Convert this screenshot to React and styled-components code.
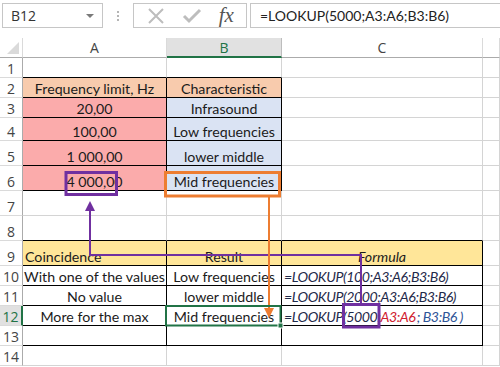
import React from 'react';
import styled, { createGlobalStyle } from 'styled-components';

const GlobalStyle = createGlobalStyle`
    html, body {
        margin: 0;
        padding: 0;
        background: #fff;
        font-family: Lato, "Liberation Sans", sans-serif;
    }
`;

const GRID = '#D4D4D4';
const BLACK = '#000';
const GREEN = '#217346';

const rowHeights = [20, 20, 20, 23, 25, 25, 25, 25, 25, 20, 20, 20, 20, 20, 21];

const rows = [
    { n: 1, cells: [{ bb: BLACK }, { bb: BLACK }, {}, {}] },
    { n: 2, cells: [
        { text: 'Frequency limit, Hz', bg: '#F8CBAD', rb: BLACK, bb: BLACK },
        { text: 'Characteristic', bg: '#F8CBAD', rb: BLACK, bb: BLACK },
        {}, {}] },
    { n: 3, cells: [
        { text: '20,00', bg: '#FBABAB', rb: BLACK, bb: BLACK },
        { text: 'Infrasound', bg: '#DAE3F3', rb: BLACK, bb: BLACK },
        {}, {}] },
    { n: 4, cells: [
        { text: '100,00', bg: '#FBABAB', rb: BLACK, bb: BLACK },
        { text: 'Low frequencies', bg: '#DAE3F3', rb: BLACK, bb: BLACK },
        {}, {}] },
    { n: 5, cells: [
        { text: '1 000,00', bg: '#FBABAB', rb: BLACK, bb: BLACK },
        { text: 'lower middle', bg: '#DAE3F3', rb: BLACK, bb: BLACK },
        {}, {}] },
    { n: 6, cells: [
        { text: '4 000,00', bg: '#FBABAB', rb: BLACK, bb: BLACK },
        { text: 'Mid frequencies', bg: '#DAE3F3', rb: BLACK, bb: BLACK },
        {}, {}] },
    { n: 7, cells: [{}, {}, {}, {}] },
    { n: 8, cells: [{ bb: BLACK }, { bb: BLACK }, { bb: BLACK }, {}] },
    { n: 9, cells: [
        { text: 'Coincidence', bg: '#FFE699', rb: BLACK, bb: BLACK, align: 'flex-start' },
        { text: 'Result', bg: '#FFE699', rb: BLACK, bb: BLACK },
        { text: 'Formula', bg: '#FFE699', rb: BLACK, bb: BLACK, italic: true },
        {}] },
    { n: 10, cells: [
        { text: 'With one of the values', rb: BLACK, bb: BLACK },
        { text: 'Low frequencies', rb: BLACK, bb: BLACK },
        { text: '=LOOKUP(100;A3:A6;B3:B6)', rb: BLACK, bb: BLACK, italic: true, align: 'flex-start', formula: true },
        {}] },
    { n: 11, cells: [
        { text: 'No value', rb: BLACK, bb: BLACK },
        { text: 'lower middle', rb: BLACK, bb: BLACK },
        { text: '=LOOKUP(2000;A3:A6;B3:B6)', rb: BLACK, bb: BLACK, italic: true, align: 'flex-start', formula: true },
        {}] },
    { n: 12, selected: true, cells: [
        { text: 'More for the max', rb: BLACK, bb: BLACK },
        { text: 'Mid frequencies', rb: BLACK, bb: BLACK },
        { rich: true, rb: BLACK, bb: BLACK, italic: true, align: 'flex-start', formula: true },
        {}] },
    { n: 13, cells: [{ rb: BLACK, bb: BLACK }, { rb: BLACK, bb: BLACK }, { rb: BLACK, bb: BLACK }, {}] },
    { n: 14, cells: [{}, {}, {}, {}] },
];

const App = () => {
    return (
        <>
            <GlobalStyle />
            <Page>
                <Toolbar>
                    <NameBox>
                        <span>B12</span>
                        <DropArrow />
                    </NameBox>
                    <Dots>
                        <i /><i /><i />
                    </Dots>
                    <FxBox>
                        <svg width="20" height="20" viewBox="0 0 20 20">
                            <path d="M3 3 L17 17 M17 3 L3 17" stroke="#BDBDBD" strokeWidth="2" fill="none" />
                        </svg>
                        <svg width="20" height="20" viewBox="0 0 20 20">
                            <path d="M2 10 L7 15 L18 4" stroke="#BDBDBD" strokeWidth="3" fill="none" />
                        </svg>
                        <FxText>fx</FxText>
                    </FxBox>
                    <FormulaInput>=LOOKUP(5000;A3:A6;B3:B6)</FormulaInput>
                </Toolbar>

                <Sheet>
                    <Corner />
                    <ColHead>A</ColHead>
                    <ColHead $active>B</ColHead>
                    <ColHead>C</ColHead>
                    <ColHead $last />

                    {rows.map((row) => (
                        <React.Fragment key={row.n}>
                            <RowHead $active={row.selected}>{row.n}</RowHead>
                            {row.cells.map((c, i) => (
                                <Cell
                                    key={i}
                                    $bg={c.bg}
                                    $rb={c.rb}
                                    $bb={c.bb}
                                    $align={c.align}
                                    $italic={c.italic}
                                    $formula={c.formula}
                                >
                                    {c.rich ? (
                                        <span>
                                            =LOOKUP(5000;<Ref $color="#D0202E">A3:A6</Ref>
                                            <Ref $color="#2F5597">&thinsp;; B3:B6 )</Ref>
                                        </span>
                                    ) : (
                                        c.text
                                    )}
                                </Cell>
                            ))}
                        </React.Fragment>
                    ))}
                </Sheet>

                <Overlay width="500" height="367" viewBox="0 0 500 367">
                    {/* purple: C12 lookup value to A6 */}
                    <rect x="66" y="172.5" width="50.5" height="22" fill="none" stroke="#7030A0" strokeWidth="3" />
                    <rect x="343.5" y="304.5" width="35.5" height="22.5" fill="none" stroke="#7030A0" strokeWidth="3" />
                    <path d="M361 303 L361 255 L90 255 L90 209" fill="none" stroke="#7030A0" strokeWidth="2" />
                    <path d="M85 211 L90 201 L95 211 Z" fill="#7030A0" />
                    {/* orange: B6 result to B12 */}
                    <rect x="165.5" y="172.5" width="114" height="23.5" fill="none" stroke="#ED7D31" strokeWidth="3" />
                    <path d="M269 197 L269 310" fill="none" stroke="#ED7D31" strokeWidth="2" />
                    <path d="M264 308 L269 318 L274 308 Z" fill="#ED7D31" />
                    {/* selection */}
                    <rect x="166" y="306" width="114.5" height="19.5" fill="none" stroke={GREEN} strokeWidth="2" />
                    <rect x="278" y="323" width="5" height="5" fill={GREEN} stroke="#fff" strokeWidth="1" />
                </Overlay>
            </Page>
        </>
    );
};

export default App;

const Page = styled.div`
    position: relative;
    width: 500px;
    height: 367px;
    overflow: hidden;
    background: #fff;
`;

const Toolbar = styled.div`
    display: flex;
    align-items: flex-start;
    height: 38px;
    padding: 3px 0 0 2px;
    box-sizing: border-box;
    font-family: "Open Sans", "Liberation Sans", sans-serif;
`;

const NameBox = styled.div`
    display: flex;
    align-items: center;
    justify-content: space-between;
    box-sizing: border-box;
    width: 101px;
    height: 25px;
    padding: 0 8px 0 8px;
    border: 1px solid #C6C6C6;
    font-size: 14px;
    color: #333;
`;

const DropArrow = styled.div`
    width: 0;
    height: 0;
    border-left: 4px solid transparent;
    border-right: 4px solid transparent;
    border-top: 4px solid #7A7A7A;
`;

const Dots = styled.div`
    display: flex;
    flex-direction: column;
    align-items: center;
    justify-content: center;
    gap: 2px;
    width: 30px;
    height: 25px;

    i {
        display: block;
        width: 2px;
        height: 2px;
        background: #B5B5B5;
    }
`;

const FxBox = styled.div`
    display: flex;
    align-items: center;
    justify-content: space-around;
    box-sizing: border-box;
    width: 114px;
    height: 25px;
    padding: 0 4px;
    border: 1px solid #C6C6C6;
`;

const FxText = styled.span`
    font-family: "Liberation Serif", serif;
    font-style: italic;
    font-size: 21px;
    color: #555;
    line-height: 1;
`;

const FormulaInput = styled.div`
    flex: 1;
    box-sizing: border-box;
    height: 25px;
    margin-left: 3px;
    padding: 0 0 0 9px;
    display: flex;
    align-items: center;
    border: 1px solid #C6C6C6;
    border-right: none;
    font-family: Lato, "Liberation Sans", sans-serif;
    font-size: 14px;
    color: #222;
`;

const Sheet = styled.div`
    display: grid;
    grid-template-columns: 23px 144px 115px 201px 1fr;
    grid-template-rows: 20px ${rowHeights.map((h) => h + 'px').join(' ')};
    font-family: Lato, "Liberation Sans", sans-serif;
    font-size: 14.2px;
    color: #1b1b1b;
`;

const Corner = styled.div`
    position: relative;
    box-sizing: border-box;
    border-right: 1px solid #DADADA;
    border-bottom: 1px solid #ABABAB;

    &::after {
        content: '';
        position: absolute;
        right: 3px;
        bottom: 3px;
        width: 0;
        height: 0;
        border-left: 12px solid transparent;
        border-bottom: 12px solid #DADADA;
    }
`;

const ColHead = styled.div`
    display: flex;
    align-items: center;
    justify-content: center;
    box-sizing: border-box;
    font-family: "Open Sans", "Liberation Sans", sans-serif;
    font-size: 14px;
    color: ${({ $active }) => ($active ? GREEN : '#444')};
    background: ${({ $active }) => ($active ? '#E1E1E1' : '#fff')};
    border-right: 1px solid ${({ $active }) => ($active ? '#BDBDBD' : '#DADADA')};
    border-bottom: ${({ $active }) => ($active ? `2px solid ${GREEN}` : '1px solid #ABABAB')};
`;

const RowHead = styled.div`
    display: flex;
    align-items: flex-end;
    justify-content: center;
    box-sizing: border-box;
    padding-bottom: 0;
    line-height: 17px;
    font-family: "Open Sans", "Liberation Sans", sans-serif;
    font-size: 14px;
    color: ${({ $active }) => ($active ? GREEN : '#444')};
    background: ${({ $active }) => ($active ? '#E1E1E1' : '#fff')};
    border-right: ${({ $active }) => ($active ? `2px solid ${GREEN}` : '1px solid #ABABAB')};
    border-bottom: 1px solid #DADADA;
`;

const Cell = styled.div`
    display: flex;
    align-items: flex-end;
    justify-content: ${({ $align }) => $align || 'center'};
    box-sizing: border-box;
    padding: 0 2px;
    overflow: visible;
    white-space: nowrap;
    line-height: 16px;
    background: ${({ $bg }) => $bg || '#fff'};
    border-right: 1px solid ${({ $rb }) => $rb || GRID};
    border-bottom: 1px solid ${({ $bb }) => $bb || GRID};
    font-style: ${({ $italic }) => ($italic ? 'italic' : 'normal')};
    letter-spacing: ${({ $formula }) => ($formula ? '-0.45px' : 'normal')};
    color: ${({ $formula }) => ($formula ? '#1F2A4A' : '#1b1b1b')};
`;

const Ref = styled.span`
    color: ${({ $color }) => $color};
`;

const Overlay = styled.svg`
    position: absolute;
    left: 0;
    top: 0;
    pointer-events: none;
`;
